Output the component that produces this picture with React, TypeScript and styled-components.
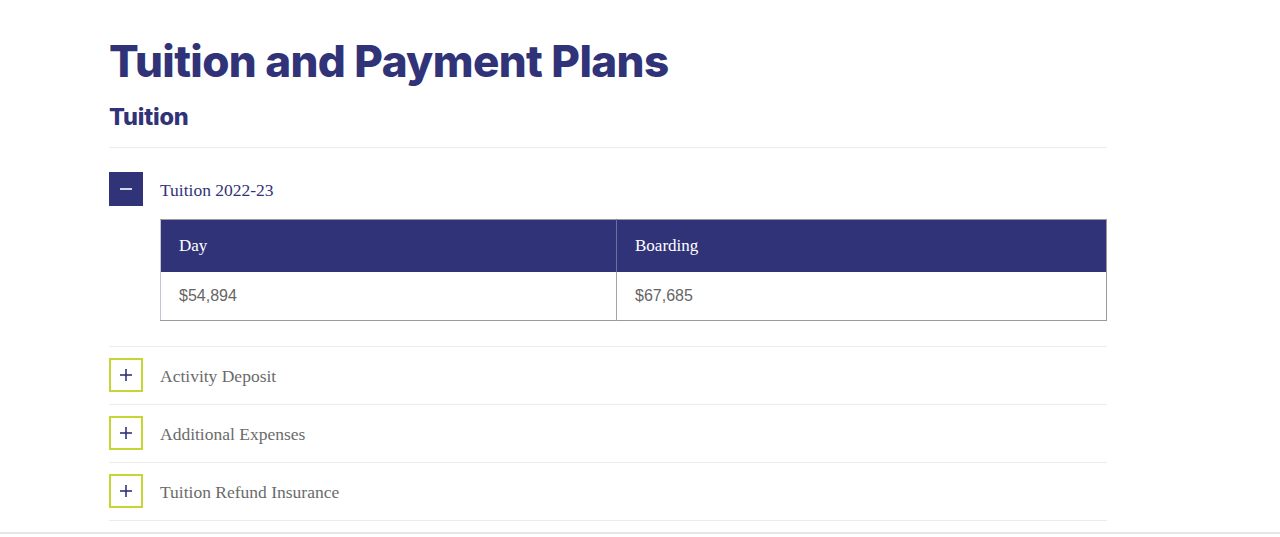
import React, { useState } from 'react';
import styled, { createGlobalStyle } from 'styled-components';

const NAVY = '#313379';
const LIME = '#c6d534';

const GlobalStyle = createGlobalStyle`
  html, body {
    margin: 0;
    padding: 0;
    background: #ffffff;
  }
  body {
    font-family: 'Liberation Serif', serif;
  }
`;

interface IFeeItem {
  title: string;
  rows?: { label: string; value: string }[];
}

const items: IFeeItem[] = [
  {
    title: 'Tuition 2022-23',
    rows: [
      { label: 'Day', value: '$54,894' },
      { label: 'Boarding', value: '$67,685' },
    ],
  },
  { title: 'Activity Deposit' },
  { title: 'Additional Expenses' },
  { title: 'Tuition Refund Insurance' },
];

const ToggleIcon = ({ open }: { open: boolean }) => (
  <svg width="14" height="14" viewBox="0 0 14 14" aria-hidden>
    <line x1="1" y1="7" x2="13" y2="7" stroke={open ? '#ffffff' : NAVY} strokeWidth="1.6" />
    {!open && <line x1="7" y1="1" x2="7" y2="13" stroke={NAVY} strokeWidth="1.6" />}
  </svg>
);

export default function App() {
  const [openIndex, setOpenIndex] = useState<number>(0);

  return (
    <>
      <GlobalStyle />
      <Page>
        <Content>
          <Title>Tuition and Payment Plans</Title>
          <SectionTitle>Tuition</SectionTitle>
          <Accordion>
            {items.map((item, i) => {
              const open = openIndex === i;
              return (
                <Item key={item.title} $open={open}>
                  <ItemHeader onClick={() => setOpenIndex(open ? -1 : i)}>
                    <ToggleBox $open={open}>
                      <ToggleIcon open={open} />
                    </ToggleBox>
                    <ItemTitle $open={open}>{item.title}</ItemTitle>
                  </ItemHeader>
                  {open && item.rows && (
                    <FeeTable>
                      <colgroup>
                        <col style={{ width: 456 }} />
                        <col />
                      </colgroup>
                      <thead>
                        <tr>
                          {item.rows.map(r => (
                            <HeadCell key={r.label}>{r.label}</HeadCell>
                          ))}
                        </tr>
                      </thead>
                      <tbody>
                        <tr>
                          {item.rows.map(r => (
                            <BodyCell key={r.label}>{r.value}</BodyCell>
                          ))}
                        </tr>
                      </tbody>
                    </FeeTable>
                  )}
                </Item>
              );
            })}
          </Accordion>
        </Content>
        <Footer />
      </Page>
    </>
  );
}

const Page = styled.div`
  display: flex;
  flex-direction: column;
  min-height: 537px;
`;

const Content = styled.main`
  width: 998px;
  margin-left: 109px;
  padding-top: 33px;
  padding-bottom: 10px;
`;

const Title = styled.h1`
  margin: 0;
  font-family: 'Inter', 'Liberation Sans', sans-serif;
  font-weight: 800;
  font-size: 44px;
  line-height: 56px;
  color: ${NAVY};
  letter-spacing: -0.6px;
`;

const SectionTitle = styled.h2`
  margin: 13px 0 0;
  font-family: 'Inter', 'Liberation Sans', sans-serif;
  font-weight: 800;
  font-size: 23.5px;
  line-height: 30px;
  color: ${NAVY};
  letter-spacing: -0.2px;
`;

const Accordion = styled.div`
  margin-top: 15px;
  display: flex;
  flex-direction: column;
`;

const Item = styled.section<{ $open: boolean }>`
  border-top: 1px solid #ececec;
  padding: ${p => (p.$open ? '24px 0 25px' : '11px 0 12px')};
  &:last-child {
    border-bottom: 1px solid #ececec;
  }
`;

const ItemHeader = styled.button`
  all: unset;
  display: flex;
  align-items: center;
  gap: 17px;
  cursor: pointer;
`;

const ToggleBox = styled.span<{ $open: boolean }>`
  box-sizing: border-box;
  width: 34px;
  height: 34px;
  display: flex;
  align-items: center;
  justify-content: center;
  background: ${p => (p.$open ? NAVY : '#ffffff')};
  border: 2px solid ${p => (p.$open ? NAVY : LIME)};
`;

const ItemTitle = styled.span<{ $open: boolean }>`
  padding-top: 2px;
  font-family: 'Liberation Serif', serif;
  font-size: 17.5px;
  color: ${p => (p.$open ? NAVY : '#6b6b6b')};
`;

const FeeTable = styled.table`
  margin: 13px 0 0 51px;
  width: 947px;
  border-collapse: collapse;
  table-layout: fixed;
  border: 1px solid #9a9a9a;
  border-left-color: #c4c4d4;
`;

const HeadCell = styled.th`
  height: 52px;
  padding: 1px 18px 0;
  box-sizing: border-box;
  background: ${NAVY};
  color: #ffffff;
  text-align: left;
  font-family: 'Liberation Serif', serif;
  font-weight: 400;
  font-size: 17px;
  & + & {
    border-left: 1px solid #6c6ea0;
  }
`;

const BodyCell = styled.td`
  height: 49px;
  padding: 0 18px;
  box-sizing: border-box;
  font-family: 'Liberation Sans', sans-serif;
  font-size: 16px;
  color: #666666;
  & + & {
    border-left: 1px solid #a5a5a5;
  }
`;

const Footer = styled.footer`
  margin-top: auto;
  height: 3px;
  border-top: 2px solid #e5e5ea;
  background: #ffffff;
`;
